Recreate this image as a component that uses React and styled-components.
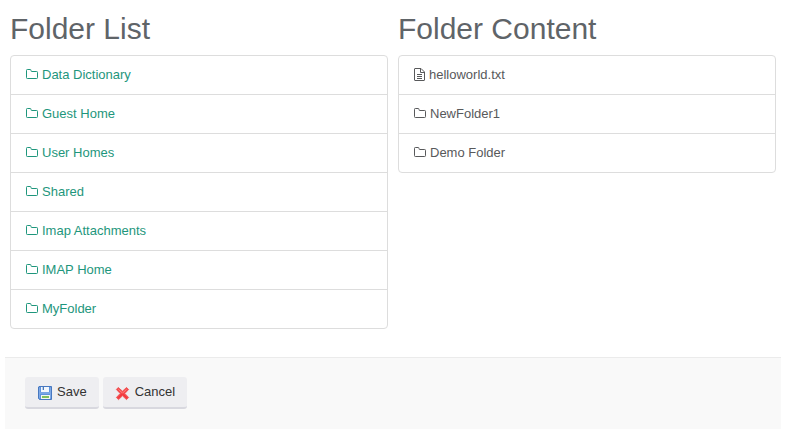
import React from "react";
import styled, { createGlobalStyle } from "styled-components";

const GlobalStyle = createGlobalStyle`
  *, *::before, *::after { box-sizing: border-box; }
  body {
    margin: 0;
    background: #fff;
    color: #58595b;
    font-family: "Liberation Sans", Arial, sans-serif;
    font-size: 13px;
    line-height: 18px;
  }
`;

const Page = styled.main`
  padding: 11px 5px 0;
`;

const Columns = styled.div`
  display: grid;
  grid-template-columns: 1fr 1fr;
  gap: 10px;
  align-items: start;
  padding: 0 5px;
`;

const Title = styled.h2`
  margin: 0 0 8px;
  font-size: 30px;
  font-weight: 400;
  line-height: 36px;
  color: #5f6468;
`;

const List = styled.ul`
  margin: 0;
  padding: 0;
  list-style: none;
  border: 1px solid #ddd;
  border-radius: 4px;
`;

const Item = styled.li`
  padding: 10px 15px;
  & + & {
    border-top: 1px solid #ddd;
  }
`;

const Entry = styled.span`
  display: flex;
  align-items: center;
  gap: 3px;
`;

const FolderLink = styled(Entry).attrs({ as: "a" })`
  color: #1e967c;
  text-decoration: none;
  &:hover {
    text-decoration: underline;
  }
`;

const Glyph = styled.svg`
  flex: none;
  display: block;
`;

const Actions = styled.footer`
  display: flex;
  gap: 4px;
  margin-top: 28px;
  padding: 19px 20px 20px;
  border-top: 1px solid #ebebeb;
  background: #f9f9f9;
`;

const Button = styled.button`
  display: flex;
  align-items: center;
  gap: 5px;
  padding: 6px 12px;
  border: 0;
  border-bottom: 2px solid #d8d8df;
  border-radius: 3px;
  background: #eeeef1;
  color: #333;
  font: inherit;
  cursor: pointer;
`;

const ButtonIcon = styled(Glyph)`
  margin-top: 2px;
`;

const FolderIcon = () => (
  <Glyph width="13" height="14" viewBox="0 0 13 14" fill="none" stroke="currentColor" aria-hidden="true">
    <path d="M.5 2.3Q.5 1.5 1.3 1.5H4.2Q5 1.5 5 2.3V2.7Q5 3.5 5.8 3.5H10.7Q11.5 3.5 11.5 4.3V9.7Q11.5 10.5 10.7 10.5H1.3Q.5 10.5 .5 9.7Z" />
  </Glyph>
);

const FileIcon = () => (
  <Glyph width="12" height="14" viewBox="0 0 12 14" fill="none" stroke="currentColor" aria-hidden="true">
    <path d="M.5 1Q.5.5 1 .5H7L10.5 4V12Q10.5 12.5 10 12.5H1Q.5 12.5.5 12ZM6.5.5V4.5H10.5M3 6.5H8M3 8.5H8M3 10.5H8" />
  </Glyph>
);

const SaveIcon = () => (
  <ButtonIcon width="15" height="15" viewBox="0 0 15 15" aria-hidden="true">
    <path d="M2 .5H14.5V13.5H2.5L1.5 12.5V1Z" fill="#5e92dc" stroke="#4778c0" />
    <path d="M2.5 1.5V12M13.5 1.5V12.5" stroke="#7fa9e6" />
    <path d="M4 1H12V6H4Z" fill="#f2f7fd" />
    <path d="M5 1H7V4H5Z" fill="#bdd0ea" />
    <path d="M6 1H7V4H6Z" fill="#4c78b8" />
    <path d="M3 6H13V8H3Z" fill="#78a5e4" />
    <path d="M4 9H13V13H4Z" fill="#f3f7ee" />
    <path d="M5 10H12V12H5Z" fill="#7fbf5c" />
  </ButtonIcon>
);

const CancelIcon = () => (
  <ButtonIcon width="15" height="15" viewBox="0 0 15 15" aria-hidden="true">
    <path
      d="M3.2 1.5 7.5 5.2 11.5 1.5 13.6 3.5 9.8 7.5 13.6 11.5 11.5 13.6 7.5 9.8 3.5 13.6 1.4 11.5 5.2 7.5 1.4 3.5Z"
      fill="#f5464b"
      stroke="#ef5a5a"
      strokeLinejoin="round"
    />
    <path d="M3.3 3.3 7.5 7.1 11.6 3.3" fill="none" stroke="#ff8580" />
    <path d="M3.5 11.7 7.5 8 11.7 11.7" fill="none" stroke="#f23137" />
  </ButtonIcon>
);

const folders = [
  "Data Dictionary",
  "Guest Home",
  "User Homes",
  "Shared",
  "Imap Attachments",
  "IMAP Home",
  "MyFolder",
];

const contents = [
  { name: "helloworld.txt", Icon: FileIcon },
  { name: "NewFolder1", Icon: FolderIcon },
  { name: "Demo Folder", Icon: FolderIcon },
];

export default function App() {
  return (
    <>
      <GlobalStyle />
      <Page>
        <Columns>
          <section aria-labelledby="folder-list">
            <Title id="folder-list">Folder List</Title>
            <List>
              {folders.map((name) => (
                <Item key={name}>
                  <FolderLink href="#">
                    <FolderIcon />
                    {name}
                  </FolderLink>
                </Item>
              ))}
            </List>
          </section>
          <section aria-labelledby="folder-content">
            <Title id="folder-content">Folder Content</Title>
            <List>
              {contents.map(({ name, Icon }) => (
                <Item key={name}>
                  <Entry>
                    <Icon />
                    {name}
                  </Entry>
                </Item>
              ))}
            </List>
          </section>
        </Columns>
        <Actions>
          <Button type="button">
            <SaveIcon />
            Save
          </Button>
          <Button type="button">
            <CancelIcon />
            Cancel
          </Button>
        </Actions>
      </Page>
    </>
  );
}
